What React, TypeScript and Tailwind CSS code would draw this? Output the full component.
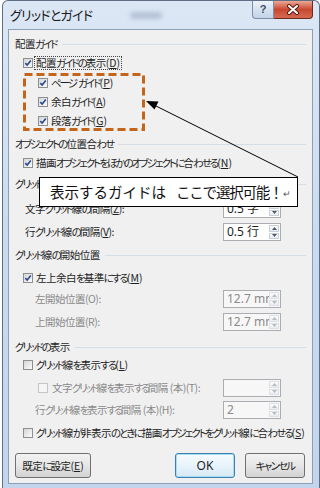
import React from "react";

const JP = "[font-family:'Noto_Sans_CJK_JP',sans-serif] [font-feature-settings:'palt'_1]";
const KANA = /[\u3040-\u30ff]/;

function J({ t, k = "tracking-[-2px]" }: { t: string; k?: string }) {
  const parts: { s: string; kana: boolean }[] = [];
  for (const ch of t) {
    const kana = KANA.test(ch);
    const last = parts[parts.length - 1];
    if (last && last.kana === kana) last.s += ch;
    else parts.push({ s: ch, kana });
  }
  return (
    <>
      {parts.map((p, i) => (
        <span key={i} className={p.kana ? k : "tracking-[-0.5px]"}>
          {p.s}
        </span>
      ))}
    </>
  );
}

function Box({ checked, disabled }: { checked?: boolean; disabled?: boolean }) {
  return (
    <span
      className={
        "relative block w-[10px] h-[10px] shrink-0 border " +
        (disabled
          ? "border-[#c5c5c5] bg-[#f5f5f5]"
          : "border-[#8e8f8f] bg-linear-to-br from-[#d6d6d6] to-[#fbfbfb]")
      }
    >
      {checked && (
        <svg className="absolute left-0 top-0" width="8" height="8" viewBox="0 0 8 8">
          <path d="M1.3 4.1 L3.2 6.1 L6.8 1.5" fill="none" stroke="#2a4a92" strokeWidth="1.6" />
        </svg>
      )}
    </span>
  );
}

function Heading({ text, mt }: { text: string; mt: string }) {
  return (
    <div className={"flex items-center h-[18px] pl-[6px] pr-[6px] " + mt}>
      <span className="text-[10.5px] text-[#1e1e1e] whitespace-nowrap">
        <J t={text} />
      </span>
      <span className="flex-1 h-px bg-[#d5dfe5] ml-[5px] mt-[1px]" />
    </div>
  );
}

function Spin({ disabled }: { disabled?: boolean }) {
  const c = disabled ? "#b8bcc2" : "#4d5a6e";
  const b = disabled ? "border-[#dde0e4]" : "border-[#c9d0da]";
  return (
    <div className="flex flex-col w-[11px] py-[1px] pr-[1px] gap-[1px]">
      <div className={"flex-1 flex items-center justify-center border bg-linear-to-b from-[#fbfbfb] to-[#e9ecf0] " + b}>
        <svg width="5" height="3" viewBox="0 0 5 3">
          <path d="M0 3 L2.5 0 L5 3Z" fill={c} />
        </svg>
      </div>
      <div className={"flex-1 flex items-center justify-center border bg-linear-to-b from-[#fbfbfb] to-[#e9ecf0] " + b}>
        <svg width="5" height="3" viewBox="0 0 5 3">
          <path d="M0 0 L2.5 3 L5 0Z" fill={c} />
        </svg>
      </div>
    </div>
  );
}

function Input({ value, disabled }: { value: string; disabled?: boolean }) {
  return (
    <div
      className={
        "flex w-[58px] h-[18px] border border-[#abadb3] " + (disabled ? "bg-[#f7f7f7]" : "bg-white")
      }
    >
      <div
        className={
          "flex-1 overflow-hidden whitespace-nowrap pl-[3px] text-[12px] leading-[16px] [font-family:'Noto_Sans','Noto_Sans_CJK_JP',sans-serif] " +
          (disabled ? "text-[#8a8a8a]" : "text-[#1e1e1e]")
        }
      >
        {value}
      </div>
      <Spin disabled={disabled} />
    </div>
  );
}

function InputRow({
  label,
  m,
  value,
  disabled,
  mt,
  pl,
  k,
}: {
  label: string;
  m: string;
  value: string;
  disabled?: boolean;
  mt: string;
  pl: string;
  k?: string;
}) {
  return (
    <div className={"flex items-center h-[18px] pr-[31px] " + mt + " " + pl}>
      <span
        className={
          "flex-1 text-[10.5px] whitespace-nowrap " + (disabled ? "text-[#8a8a8a]" : "text-[#1e1e1e]")
        }
      >
        <J t={label} k={k} />
        <span className="tracking-[-0.5px]">
          ({disabled ? m : <u>{m}</u>}):
        </span>
      </span>
      <Input value={value} disabled={disabled} />
    </div>
  );
}

function CbRow({
  label,
  m,
  checked,
  mt,
  pl,
  focus,
  k,
}: {
  label: string;
  m: string;
  checked?: boolean;
  mt: string;
  pl: string;
  focus?: boolean;
  k?: string;
}) {
  const content = (
    <>
      <J t={label} k={k} />(<u>{m}</u>)
    </>
  );
  return (
    <div className={"flex items-center h-[18px] " + mt + " " + pl}>
      <Box checked={checked} />
      {focus ? (
        <span className="ml-[1px] border border-dotted border-[#444] px-[1px] text-[10.5px] leading-[12px] text-[#1e1e1e] whitespace-nowrap">
          {content}
        </span>
      ) : (
        <span className="ml-[3px] text-[10.5px] text-[#1e1e1e] whitespace-nowrap">{content}</span>
      )}
    </div>
  );
}

export default function App() {
  return (
    <div className={"relative w-[320px] h-[488px] overflow-hidden bg-white " + JP}>
      <div className="ml-[2px] w-[318px] h-[488px] border-x border-t border-[#5f6e82] rounded-t-[6px] bg-linear-to-b from-[#dce7f5] via-[#cadbef] to-[#c3d5ec] flex flex-col">
        {/* title bar */}
        <div className="flex h-[28px] items-start">
          <span className="mt-[6px] ml-[7px] text-[13px] leading-[16px] text-[#1a1a1a] tracking-[-0.8px]">
            グリッドとガイド
          </span>
          <span className="mt-[11px] ml-[38px] w-[32px] h-[7px] bg-[#b4c2d4] blur-[2px] rounded" />
          <div className="flex ml-auto mr-[6px]">
            <div className="w-[22px] h-[18px] border border-t-0 border-[#7d8ea6] rounded-bl-[4px] bg-linear-to-b from-[#eef3fa] via-[#d6e1ef] to-[#c3d3e8] flex items-center justify-center">
              <span className="text-[11px] font-bold text-[#3f4e63] leading-none [font-family:'Liberation_Sans',sans-serif]">
                ?
              </span>
            </div>
            <div className="w-[39px] h-[18px] border border-l-0 border-t-0 border-[#6a2a20] rounded-br-[4px] bg-linear-to-b from-[#e9a797] via-[#c9472f] to-[#d46a52] flex items-center justify-center">
              <svg width="14" height="11" viewBox="0 0 14 11">
                <path d="M3 2 L11 9 M11 2 L3 9" stroke="#5a1c12" strokeWidth="4" strokeLinecap="round" />
                <path d="M3 2 L11 9 M11 2 L3 9" stroke="#ffffff" strokeWidth="2" strokeLinecap="round" />
              </svg>
            </div>
          </div>
        </div>
        {/* panel */}
        <div className="ml-[5px] w-[305px] h-[455px] border border-[#8d9fb6] bg-[#f0f0f0] flex flex-col">
          <Heading text="配置ガイド" mt="mt-[5px]" />
          <CbRow checked focus mt="mt-[1px]" pl="pl-[14px]" label="配置ガイドの表示" m="D" />
          <CbRow checked mt="mt-[2px]" pl="pl-[29px]" label="ページ ガイド" m="P" />
          <CbRow checked mt="mt-[1px]" pl="pl-[29px]" label="余白ガイド" m="A" />
          <CbRow checked mt="mt-[1px]" pl="pl-[29px]" label="段落ガイド" m="G" />
          <Heading text="オブジェクトの位置合わせ" mt="mt-[5px]" />
          <CbRow
            checked
            mt="mt-[1px]"
            pl="pl-[14px]"
            label="描画オブジェクトをほかのオブジェクトに合わせる"
            m="N"
          />
          <Heading text="グリッド線の間隔" mt="mt-[3px]" />
          <InputRow mt="mt-[7px]" pl="pl-[16px]" value="0.5 字" label="文字グリッド線の間隔" m="Z" />
          <InputRow mt="mt-[5px]" pl="pl-[16px]" value="0.5 行" label="行グリッド線の間隔" m="V" />
          <Heading text="グリッド線の開始位置" mt="mt-[5px]" />
          <CbRow checked mt="mt-[5px]" pl="pl-[14px]" label="左上余白を基準にする" m="M" />
          <InputRow disabled mt="mt-[3px]" pl="pl-[26px]" value="12.7 mm" label="左開始位置" m="O" />
          <InputRow disabled mt="mt-[5px]" pl="pl-[26px]" value="12.7 mm" label="上開始位置" m="R" />
          <Heading text="グリッドの表示" mt="mt-[7px]" />
          <CbRow mt="mt-0" pl="pl-[14px]" label="グリッド線を表示する" m="L" />
          <div className="flex items-center h-[18px] mt-[5px] pl-[29px] pr-[31px]">
            <Box disabled />
            <span className="ml-[4px] flex-1 text-[10.5px] text-[#8a8a8a] whitespace-nowrap">
              <J t="文字グリッド線を表示する間隔" k="tracking-[-2.5px]" />
              <span className="tracking-[-0.5px]"> (本)(T):</span>
            </span>
            <Input value="" disabled />
          </div>
          <InputRow
            disabled
            mt="mt-[4px]"
            pl="pl-[26px]"
            value="2"
            label="行グリッド線を表示する間隔 (本)"
            m="H"
            k="tracking-[-2.5px]"
          />
          <CbRow
            mt="mt-[5px]"
            pl="pl-[14px]"
            label="グリッド線が非表示のときに描画オブジェクトをグリッド線に合わせる"
            m="S"
          />
          <div className="flex h-[25px] mt-[11px] pl-[6px] pr-[7px]">
            <button className="w-[76px] h-[25px] rounded-[3px] border border-[#707070] bg-linear-to-b from-[#f2f2f2] via-[#e6e6e6] to-[#d2d2d2] text-[10.5px] text-[#1e1e1e]">
              <J t="既定に設定" />(<u>E</u>)
            </button>
            <button className="ml-auto w-[60px] h-[25px] rounded-[3px] border border-[#3c7fb1] shadow-[inset_0_0_0_1px_#a9dcf6] bg-linear-to-b from-[#f6fbfe] via-[#e8f3fb] to-[#d6e9f6] text-[12px] text-[#1e1e1e] [font-family:'Noto_Sans',sans-serif]">
              OK
            </button>
            <button className="ml-[10px] w-[60px] h-[25px] rounded-[3px] border border-[#707070] bg-linear-to-b from-[#f2f2f2] via-[#e6e6e6] to-[#d2d2d2] text-[10.5px] text-[#1e1e1e]">
              <J t="キャンセル" k="tracking-[-1.8px]" />
            </button>
          </div>
        </div>
      </div>

      {/* annotation overlay */}
      <svg className="absolute left-0 top-0 pointer-events-none" width="320" height="488" viewBox="0 0 320 488">
        <rect x="24.5" y="74.5" width="119" height="55" fill="none" stroke="#c5651b" strokeWidth="3" strokeDasharray="8 4" />
        <line x1="298" y1="177" x2="154" y2="105" stroke="#000" strokeWidth="1" />
        <path d="M146 101 L158.5 101.5 L154.5 109.5 Z" fill="#000" />
      </svg>
      <div className="absolute left-[39px] top-[177px] w-[259px] h-[30px] bg-white border border-black flex items-center pl-[10px] [font-feature-settings:normal]">
        <span className="text-[14.5px] text-[#111] whitespace-nowrap">表示するガイドは</span>
        <span className="inline-block w-[10px]" />
        <span className="text-[14.5px] text-[#111] whitespace-nowrap tracking-[-1.2px]">ここで選択可能！</span>
        <span className="ml-[1px] mt-[3px] text-[9px] text-[#555]">↵</span>
      </div>
    </div>
  );
}
